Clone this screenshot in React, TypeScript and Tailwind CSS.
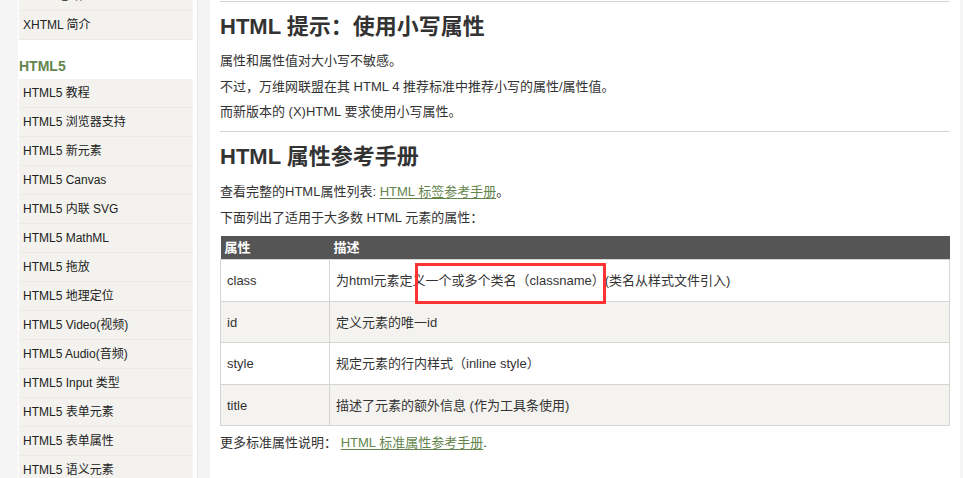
const sideItems = [
  "HTML5 教程",
  "HTML5 浏览器支持",
  "HTML5 新元素",
  "HTML5 Canvas",
  "HTML5 内联 SVG",
  "HTML5 MathML",
  "HTML5 拖放",
  "HTML5 地理定位",
  "HTML5 Video(视频)",
  "HTML5 Audio(音频)",
  "HTML5 Input 类型",
  "HTML5 表单元素",
  "HTML5 表单属性",
  "HTML5 语义元素",
];

const rows = [
  { attr: "class", desc: "为html元素定义一个或多个类名（classname）(类名从样式文件引入)" },
  { attr: "id", desc: "定义元素的唯一id" },
  { attr: "style", desc: "规定元素的行内样式（inline style）" },
  { attr: "title", desc: "描述了元素的额外信息 (作为工具条使用)" },
];

function SideItem({ label }: { label: string }) {
  return (
    <div className="flex h-[29px] items-center border-b border-[#e9e9e6] bg-[#f3f2ee] pl-1 text-[12px] text-[#222]">
      {label}
    </div>
  );
}

export default function App() {
  return (
    <div
      className="flex h-[478px] w-[963px] overflow-hidden bg-[#f5f5f5] text-[#333]"
      style={{ fontFamily: '"Liberation Sans", "Noto Sans CJK SC", sans-serif' }}
    >
      {/* sidebar */}
      <div className="ml-[18px] w-[179px] shrink-0 bg-white">
        <div className="mt-[-18px] w-[175px] pl-px">
          <SideItem label="HTML 总结" />
          <SideItem label="XHTML 简介" />
          <div className="flex h-[39px] items-center pt-[14px] text-[14px] font-bold text-[#64854c]">HTML5</div>
          {sideItems.map((s) => (
            <SideItem key={s} label={s} />
          ))}
        </div>
      </div>

      <div className="w-[13px] shrink-0 border-l border-[#e6e6e6] bg-[#f4f4f4]" />

      {/* main */}
      <div className="relative w-[750px] shrink-0 bg-white px-[10px] pt-px">
        <div className="border-t border-[#d4d4d4]" />
        <h2 className="mt-[10px] text-[22px] font-bold leading-[30px] text-[#333]">HTML 提示：使用小写属性</h2>
        <div className="mt-[6px] text-[13px] leading-[25.5px]">
          <p>属性和属性值对大小写不敏感。</p>
          <p>不过，万维网联盟在其 HTML 4 推荐标准中推荐小写的属性/属性值。</p>
          <p>而新版本的 (X)HTML 要求使用小写属性。</p>
        </div>
        <div className="mt-[6px] border-t border-[#d4d4d4]" />
        <h2 className="mt-[10px] text-[22px] font-bold leading-[30px] text-[#333]">HTML 属性参考手册</h2>
        <div className="mt-[7px] text-[13px] leading-[26px]">
          <p>
            查看完整的HTML属性列表:{" "}
            <span className="text-[#64854c] underline underline-offset-2">HTML 标签参考手册</span>。
          </p>
          <p>下面列出了适用于大多数 HTML 元素的属性：</p>
        </div>

        <table className="mt-[5px] w-full border-collapse text-[13px]">
          <thead>
            <tr className="h-[24px] bg-[#555] text-left text-white">
              <th className="w-[109px] px-[4px] font-bold">属性</th>
              <th className="px-[4px] font-bold">描述</th>
            </tr>
          </thead>
          <tbody>
            {rows.map((r, i) => (
              <tr key={r.attr} className={i % 2 === 1 ? "h-[41.5px] bg-[#f5f3ef]" : "h-[41.5px] bg-white"}>
                <td className="border border-[#d4d4d4] px-[6px] pt-px">{r.attr}</td>
                <td className="border border-[#d4d4d4] px-[6px] pt-px">{r.desc}</td>
              </tr>
            ))}
          </tbody>
        </table>

        <p className="mt-[4px] text-[13px] leading-[26px]">
          更多标准属性说明：{" "}
          <span className="text-[#64854c] underline underline-offset-2">HTML 标准属性参考手册</span>.
        </p>

        {/* annotation box */}
        <div className="absolute left-[205px] top-[263px] h-[41px] w-[191px] border-[3px] border-[#f33]" />
      </div>

      <div className="ml-[10px] w-[3px] shrink-0 bg-[#f0f0f0]" />
    </div>
  );
}
